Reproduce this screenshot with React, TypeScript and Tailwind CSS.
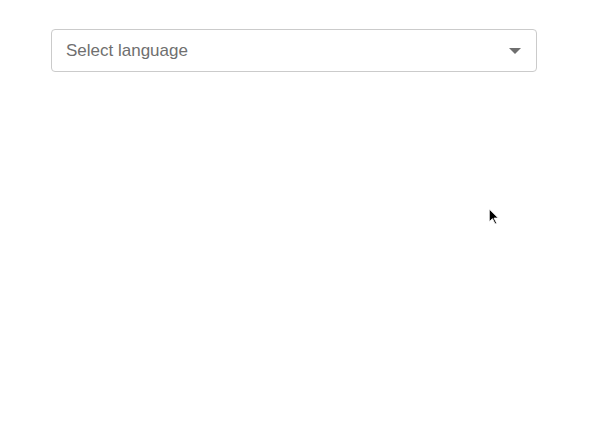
export default function App() {
  return (
    <div className="relative h-[441px] w-[600px] bg-white pt-[29px] pl-[51px] font-['Liberation_Sans',Arial,sans-serif]">
      <div className="flex h-[43px] w-[486px] items-center justify-between rounded-[4px] border border-[#cbcbcb] pl-[14px] pr-[15px]">
        <span className="pt-[1px] text-[17px] text-[#6f6f6f]">Select language</span>
        <svg width="12" height="6" viewBox="0 0 12 6">
          <path d="M0 0h12L6 6z" fill="#6f6f6f" />
        </svg>
      </div>
      <svg
        width="11"
        height="17"
        viewBox="0 0 10 16"
        className="absolute left-[488px] top-[208px]"
      >
        <path d="M1 1v12l3-3 2.5 5 1.5-.7L5.5 9.5H9.5z" fill="#000" stroke="#fff" strokeWidth="0.8" />
      </svg>
    </div>
  );
}
